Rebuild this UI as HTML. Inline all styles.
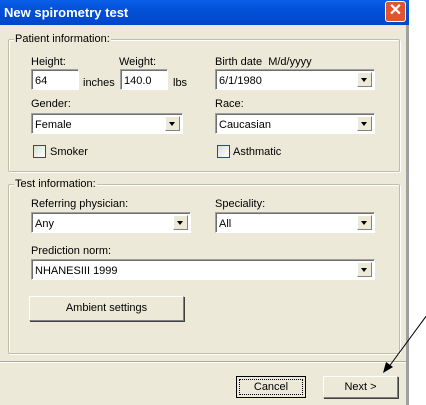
<!DOCTYPE html>
<html><head><style>
body{margin:0;width:426px;height:405px;background:#fff;font-family:"Liberation Sans",sans-serif;font-size:11px;position:relative;overflow:hidden;color:#000}
.a{position:absolute}
.dlg{left:0;top:0;width:406px;height:405px;background:#ece9d8;border-right:3px solid #a0a0a0}
.title{left:0;top:0;width:409px;height:25px;background:linear-gradient(#0a5fe8,#0350d8 40%,#0246c8);color:#fff;font-weight:bold;font-size:13px}
.grp{border:1px solid #c0bda8;border-radius:2px;box-shadow:inset 1px 1px 0 #fff,1px 1px 0 #fff}
.leg{background:#ece9d8;padding:0 1px}
.tb{background:#fff;box-sizing:border-box;height:21px;padding:5px 0 0 3px;border:1px solid;border-color:#a0a0a0 #fff #fff #a0a0a0;box-shadow:inset 1px 1px 0 #707070}
.dd{position:absolute;right:2px;top:2px;width:15px;height:15px;background:#ece9d8;border:1px solid;border-color:#fff #808080 #808080 #fff;box-sizing:border-box}
.dd:after{content:"";position:absolute;left:3px;top:5px;border:3.5px solid transparent;border-top:4px solid #000;border-bottom:0}
.cb{width:13px;height:13px;border:1px solid #1c5180;box-sizing:border-box;background:linear-gradient(135deg,#dcdcd6,#fff)}
.btn{border:1px solid #707070;border-color:#fff #808080 #808080 #fff;box-shadow:1px 1px 0 #404040;box-sizing:border-box;text-align:center;background:#ece9d8}
</style></head><body>
<div class="a dlg"></div>
<div class="a title"><span class="a" style="left:4px;top:5px">New spirometry test</span>
<div class="a" style="left:385px;top:1px;width:21px;height:21px;border:1px solid #fff;border-radius:3px;background:#e2542e;box-sizing:border-box;color:#fff;font-size:16px;line-height:18px;text-align:center">✕</div></div>

<div class="a grp" style="left:8px;top:39px;width:390px;height:131px"></div>
<span class="a leg" style="left:14px;top:33px">Patient information:</span>
<span class="a" style="left:31px;top:56px">Height:</span>
<span class="a" style="left:119px;top:56px">Weight:</span>
<div class="a tb" style="left:31px;top:69px;width:48px">64</div>
<span class="a" style="left:83px;top:77px">inches</span>
<div class="a tb" style="left:120px;top:69px;width:48px">140.0</div>
<span class="a" style="left:173px;top:77px">lbs</span>
<span class="a" style="left:215px;top:56px">Birth date &nbsp;M/d/yyyy</span>
<div class="a tb" style="left:215px;top:69px;width:160px">6/1/1980<div class="dd"></div></div>
<span class="a" style="left:31px;top:98px">Gender:</span>
<div class="a tb" style="left:31px;top:113px;width:152px">Female<div class="dd"></div></div>
<span class="a" style="left:215px;top:98px">Race:</span>
<div class="a tb" style="left:215px;top:113px;width:160px">Caucasian<div class="dd"></div></div>
<div class="a cb" style="left:33px;top:145px"></div><span class="a" style="left:50px;top:146px">Smoker</span>
<div class="a cb" style="left:217px;top:145px"></div><span class="a" style="left:233px;top:146px">Asthmatic</span>

<div class="a grp" style="left:8px;top:184px;width:390px;height:168px"></div>
<span class="a leg" style="left:14px;top:178px">Test information:</span>
<span class="a" style="left:31px;top:198px">Referring physician:</span>
<div class="a tb" style="left:31px;top:212px;width:160px">Any<div class="dd"></div></div>
<span class="a" style="left:215px;top:198px">Speciality:</span>
<div class="a tb" style="left:215px;top:212px;width:160px">All<div class="dd"></div></div>
<span class="a" style="left:31px;top:245px">Prediction norm:</span>
<div class="a tb" style="left:31px;top:259px;width:344px">NHANESIII 1999<div class="dd"></div></div>
<div class="a btn" style="left:29px;top:296px;width:155px;height:25px;line-height:23px">Ambient settings</div>

<div class="a" style="left:0;top:361px;width:406px;height:1px;background:#aca899;border-bottom:1px solid #fff"></div>
<div class="a" style="left:236px;top:376px;width:70px;height:22px;border:1px solid #000;box-sizing:border-box;background:#ece9d8"><div style="margin:2px;border:1px dotted #000;height:14px;line-height:14px;text-align:center">Cancel</div></div>
<div class="a btn" style="left:323px;top:376px;width:75px;height:22px;line-height:20px">Next &gt;</div>
<svg class="a" style="left:0;top:0" width="426" height="405"><line x1="427" y1="315" x2="388" y2="368" stroke="#000" stroke-width="1"/><polygon points="383,373 386,362 393,367" fill="#000"/></svg>
</body></html>
